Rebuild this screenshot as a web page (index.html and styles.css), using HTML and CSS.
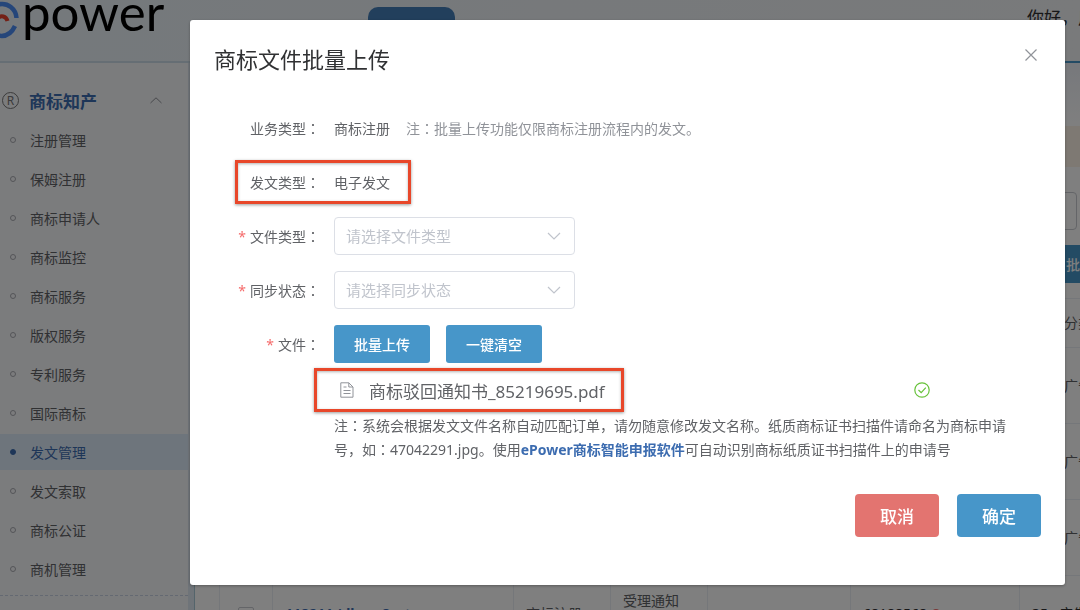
FILE: index.html
```html
<!DOCTYPE html>
<html lang="zh-CN">
<head>
    <meta charset="UTF-8">
    <meta name="viewport" content="width=device-width, initial-scale=1.0">
    <title>商标文件批量上传</title>
    <link rel="stylesheet" href="styles.css">
</head>
<body>

    <header class="header">
        <a href="#" class="logo">
            <svg class="logo-mark" width="20" height="40" viewBox="0 0 20 40" fill="none">
                <path d="M-2 4.500C8 2 16 9 16.500 18" stroke="#4b8cf5" stroke-width="4.500"/>
                <path d="M15 26C11 34.500 5 37 -2 35.500" stroke="#4b8cf5" stroke-width="4.500"/>
                <path d="M-2 18C1 15 6 16 7.500 21" stroke="#e8402c" stroke-width="4"/>
            </svg>
            <span class="logo-text">power</span>
        </a>
        <a href="#" class="header-tab" aria-label="首页"></a>
        <span class="hello">你好，用户</span>
    </header>

    <div class="layout">
        <nav class="sidebar">
            <div class="menu-title">
                <span class="reg-icon">R</span>
                <span class="menu-name">商标知产</span>
                <svg width="12" height="7" viewBox="0 0 12 7" fill="none" stroke="#909399"><path d="M.5 6L6 .8L11.500 6"/></svg>
            </div>
            <ul class="menu">
                <li><a href="#">注册管理</a></li>
                <li><a href="#">保姆注册</a></li>
                <li><a href="#">商标申请人</a></li>
                <li><a href="#">商标监控</a></li>
                <li><a href="#">商标服务</a></li>
                <li><a href="#">版权服务</a></li>
                <li><a href="#">专利服务</a></li>
                <li><a href="#">国际商标</a></li>
                <li><a href="#" class="active">发文管理</a></li>
                <li><a href="#">发文索取</a></li>
                <li><a href="#">商标公证</a></li>
                <li><a href="#">商机管理</a></li>
            </ul>
        </nav>

        <main class="main">
            <div class="alert"></div>
            <input type="text" class="search" aria-label="搜索">
            <div class="toolbar">
                <button type="button" class="btn batch">批量上传</button>
            </div>
            <table class="table">
                <colgroup>
                    <col class="col-check"><col class="col-name"><col class="col-type"><col class="col-type"><col class="col-user"><col class="col-no"><col class="col-class">
                </colgroup>
                <thead>
                    <tr><th></th><th></th><th></th><th></th><th></th><th></th><th class="indent">分类</th></tr>
                </thead>
                <tbody>
                    <tr><td></td><td></td><td></td><td></td><td></td><td></td><td class="indent">广告</td></tr>
                    <tr><td></td><td></td><td></td><td></td><td></td><td></td><td class="indent">广告</td></tr>
                    <tr><td></td><td></td><td></td><td></td><td></td><td></td><td class="indent">广告</td></tr>
                    <tr>
                        <td class="center"><input type="checkbox" class="check" aria-label="选择"></td>
                        <td><a href="#" class="order">118211 (dhere8ert</a></td>
                        <td>商标注册</td>
                        <td>受理通知<br>书</td>
                        <td></td>
                        <td class="strong">68188568 <span class="dot"></span></td>
                        <td class="strong">35 &nbsp; 广告</td>
                    </tr>
                </tbody>
            </table>
        </main>
    </div>

    <div class="overlay">
        <section class="dialog" role="dialog" aria-modal="true" aria-labelledby="dialog-title">
            <div class="dialog-header">
                <h1 id="dialog-title">商标文件批量上传</h1>
                <button type="button" class="close" aria-label="关闭">
                    <svg width="12" height="12" viewBox="0 0 12 12" stroke="#909399" stroke-width="1.200"><path d="M.5 .5L11.500 11.500M11.500 .5L.5 11.500"/></svg>
                </button>
            </div>

            <form class="form">
                <div class="row">
                    <span class="label">业务类型<span class="colon">：</span></span>
                    <span>商标注册</span>
                    <span class="tip">注<span class="colon">：</span>批量上传功能仅限商标注册流程内的发文。</span>
                </div>
                <div class="row">
                    <span class="label">发文类型<span class="colon">：</span></span>
                    <span>电子发文</span>
                    <span class="mark mark-type"></span>
                </div>
                <div class="row">
                    <label class="label required" for="file-type">文件类型<span class="colon">：</span></label>
                    <div class="select">
                        <select id="file-type"><option>请选择文件类型</option></select>
                        <svg class="arrow" width="14" height="8" viewBox="0 0 14 8" fill="none" stroke="#c0c4cc" stroke-width="1.200"><path d="M1 1L7 7L13 1"/></svg>
                    </div>
                </div>
                <div class="row">
                    <label class="label required" for="sync-state">同步状态<span class="colon">：</span></label>
                    <div class="select">
                        <select id="sync-state"><option>请选择同步状态</option></select>
                        <svg class="arrow" width="14" height="8" viewBox="0 0 14 8" fill="none" stroke="#c0c4cc" stroke-width="1.200"><path d="M1 1L7 7L13 1"/></svg>
                    </div>
                </div>
                <div class="row">
                    <span class="label required">文件<span class="colon">：</span></span>
                    <div class="buttons">
                        <button type="button" class="btn">批量上传</button>
                        <button type="button" class="btn">一键清空</button>
                    </div>
                </div>

                <div class="file">
                    <svg width="14" height="16" viewBox="0 0 14 16" fill="none" stroke="#909399"><path d="M.8 .8H8.800L13 5V15.200H.8ZM8.800 .8V5H13M3.500 5H6.500M3.500 8.500H10.500M3.500 11.500H10.500"/></svg>
                    <span class="file-name">商标驳回通知书_85219695.pdf</span>
                    <svg width="16" height="16" viewBox="0 0 16 16" fill="none" stroke="#67c23a" stroke-width="1.200"><circle cx="8" cy="8" r="7.200"/><path d="M4.500 8L7.200 10.700L11.800 5.700"/></svg>
                    <span class="mark mark-file"></span>
                </div>

                <p class="note">注<span class="colon">：</span>系统会根据发文文件名称自动匹配订单，请勿随意修改发文名称。纸质商标证书扫描件请命名为商标申请号，如<span class="colon">：</span>47042291.jpg。使用<a href="#">ePower商标智能申报软件</a>可自动识别商标纸质证书扫描件上的申请号</p>

                <div class="footer">
                    <button type="button" class="btn btn-large btn-danger">取消</button>
                    <button type="submit" class="btn btn-large">确定</button>
                </div>
            </form>
        </section>
    </div>

</body>
</html>
```
FILE: styles.css
```css
* {
    box-sizing: border-box;
}
body {
    margin: 0;
    height: 100vh;
    overflow: hidden;
    display: flex;
    flex-direction: column;
    font-family: "Noto Sans", "Noto Sans CJK SC", sans-serif;
    font-size: 14px;
    color: #606266;
    background-color: #fff;
}
a {
    color: inherit;
    text-decoration: none;
}
button, input, select {
    font-family: inherit;
}
/* colon in the middle of its cell */
.colon {
    font-family: "Noto Sans CJK TC", sans-serif;
    font-feature-settings: "locl" 0;
    line-height: 1;
}

/* header */
.header {
    display: flex;
    flex: none;
    height: 63px;
    background: linear-gradient(90deg, #eaf2f8, #f2f4f6);
    border-bottom: 2px solid #bcd4e4;
    border-image: linear-gradient(90deg, #cddde8, #cddde8 50%, #4796c9) 1;
    overflow: hidden;
}
.logo {
    display: flex;
    flex: none;
    gap: 2px;
    width: 368px;
    color: #000;
}
.logo-text {
    font-family: Lato, sans-serif;
    font-size: 51px;
    line-height: 24px;
}
.header-tab {
    width: 87px;
    margin-top: 7px;
    background-color: #447eb8;
    border-radius: 10px 10px 0 0;
}
.hello {
    flex: none;
    margin-left: auto;
    margin-right: -32px;
    font-size: 17px;
    line-height: 36px;
    color: #303133;
    white-space: nowrap;
}

/* sidebar */
.layout {
    display: flex;
    flex: 1;
    min-height: 0;
}
.sidebar {
    flex: none;
    width: 195px;
    padding-top: 17px;
    background-color: #f7f8fb;
    border-right: 1px solid #a9c9d6;
    box-shadow: inset -6px 0 #dfe8f2;
}
.menu-title {
    display: flex;
    align-items: center;
    height: 40px;
    padding-left: 2px;
    padding-right: 32px;
}
.reg-icon {
    width: 17px;
    height: 17px;
    border: 1px solid #777;
    border-radius: 50%;
    font-size: 12px;
    line-height: 15px;
    text-align: center;
    color: #777;
}
.menu-name {
    flex: 1;
    margin-left: 10px;
    font-size: 17px;
    font-weight: bold;
    color: #3c6cb0;
}
.menu {
    display: flex;
    flex-direction: column;
    gap: 3px;
    list-style: none;
    margin: 2px 6px 0 0;
    padding: 0 0 8px;
    border-bottom: 1px dashed #c9d2e4;
}
.menu a {
    display: flex;
    align-items: center;
    gap: 14px;
    height: 36px;
    padding-left: 10px;
}
.menu a::before {
    content: "";
    width: 4px;
    height: 4px;
    border: 1px solid #a9abb0;
    border-radius: 50%;
}
.menu .active {
    color: #3c6cb0;
    background-color: #dceaf8;
}
.menu .active::before {
    background-color: #3c6cb0;
    border-color: #3c6cb0;
}

/* page content */
.main {
    flex: 1;
    min-width: 0;
    padding: 63px 0 0 24px;
    overflow: hidden;
    background: linear-gradient(#eef1f8, #fff 63px);
}
.alert {
    height: 41px;
    background-color: #fdf3e6;
}
.search {
    display: block;
    width: calc(100% - 3px);
    height: 38px;
    margin-top: 25px;
    background-color: #fff;
    border: 1px solid #c8cad0;
    border-radius: 4px;
}
.toolbar {
    display: flex;
    justify-content: flex-end;
    margin: 15px -62px 15px 0;
}
.table {
    width: 1000px;
    table-layout: fixed;
    border-collapse: collapse;
    line-height: 26px;
}
.table th, .table td {
    padding: 0 12px;
    border: 1px solid #ebeef5;
    text-align: left;
    font-weight: normal;
    white-space: nowrap;
}
.table th {
    height: 49px;
}
.table td {
    height: 76px;
}
.table .indent {
    padding-left: 44px;
}
.table .center {
    text-align: center;
}
.col-check {
    width: 53px;
}
.col-name {
    width: 241px;
}
.col-type {
    width: 97px;
}
.col-user {
    width: 143px;
}
.col-no {
    width: 169px;
}
.col-class {
    width: 200px;
}
.check {
    appearance: none;
    width: 16px;
    height: 16px;
    margin: 0;
    border: 1px solid #c8cad0;
    border-radius: 2px;
    vertical-align: middle;
}
.order {
    font-weight: bold;
    color: #3c6cb0;
}
.strong {
    font-weight: bold;
    color: #303133;
}
.dot {
    display: inline-block;
    width: 10px;
    height: 10px;
    border-radius: 50%;
    background-color: #f56c6c;
}

/* dialog */
.overlay {
    position: fixed;
    inset: 0;
    padding: 20px 15px 24px 190px;
    overflow: hidden;
    background-color: rgba(0, 0, 0, 0.5);
}
.dialog {
    padding: 24px 24px 48px;
    background-color: #fff;
    border-radius: 3px;
    box-shadow: 0 1px 3px rgba(0, 0, 0, 0.3);
}
.dialog-header {
    display: flex;
    justify-content: space-between;
    align-items: flex-start;
}
.dialog h1 {
    margin: 0;
    font-size: 22px;
    font-weight: normal;
    line-height: 30px;
    color: #303133;
}
.close {
    display: flex;
    padding: 5px 4px;
    border: none;
    background: none;
    cursor: pointer;
}
.form {
    display: flex;
    flex-direction: column;
    padding-top: 35px;
}
.row {
    position: relative;
    display: flex;
    align-items: center;
    height: 38px;
    margin-bottom: 16px;
}
.label {
    flex: none;
    width: 120px;
    padding-right: 14px;
    text-align: right;
}
.required::before {
    content: "*";
    margin-right: 4px;
    color: #f56c6c;
}
.tip {
    margin-left: 16px;
    color: #909399;
}
.select {
    position: relative;
    width: 241px;
}
.select select {
    appearance: none;
    width: 100%;
    height: 38px;
    padding: 0 11px;
    font-size: 15px;
    color: #c0c4cc;
    background-color: #fff;
    border: 1px solid #dcdfe6;
    border-radius: 4px;
}
.arrow {
    position: absolute;
    top: 15px;
    right: 14px;
    pointer-events: none;
}
.buttons {
    display: flex;
    gap: 16px;
}
.btn {
    height: 38px;
    padding: 0 20px;
    font-size: 14px;
    font-weight: 500;
    color: #fff;
    background-color: #4796c9;
    border: none;
    border-radius: 3px;
    cursor: pointer;
}
.btn:hover {
    opacity: 0.9;
}
.file {
    position: relative;
    display: flex;
    align-items: center;
    height: 38px;
    margin: -8px 111px 5px 120px;
    padding-left: 6px;
}
.file-name {
    flex: 1;
    margin-left: 15px;
    font-size: 17px;
}
/* red frames over the form */
.mark {
    position: absolute;
    border: 3px solid #e8472a;
    box-shadow: 0 1px 3px rgba(0, 0, 0, 0.4), inset 0 1px 3px rgba(0, 0, 0, 0.3);
    pointer-events: none;
}
.mark-type {
    top: -3px;
    bottom: -3px;
    left: 21px;
    width: 176px;
}
.mark-file {
    top: -3px;
    bottom: -3px;
    left: -20px;
    width: 310px;
}
.note {
    margin: 0 12px 0 120px;
    line-height: 24px;
}
.note a {
    font-weight: bold;
    color: #3c6cb0;
}
.footer {
    display: flex;
    justify-content: flex-end;
    gap: 18px;
    margin-top: 32px;
}
.btn-large {
    height: 43px;
    padding: 0 25px;
    font-size: 17px;
    border-radius: 4px;
}
.btn-danger {
    background-color: #e37470;
}
@media (max-width: 800px) {
    .overlay {
        padding: 20px 15px;
        overflow: auto;
    }
}
```
